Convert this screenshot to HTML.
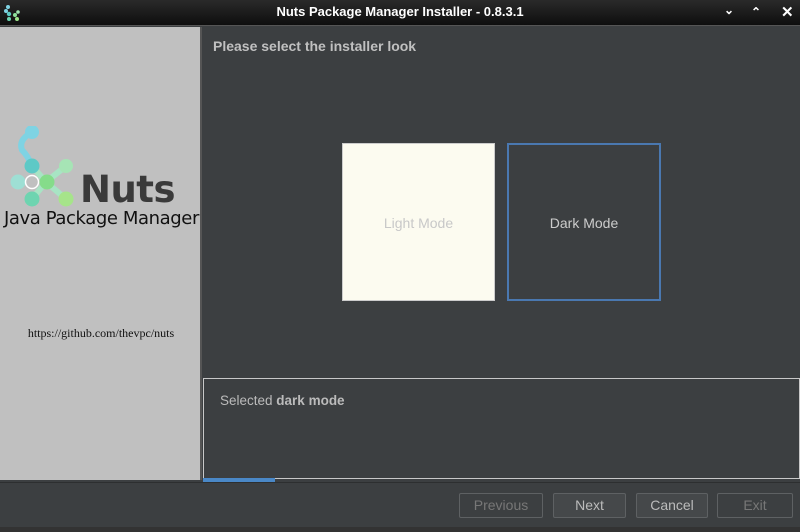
<!DOCTYPE html>
<html><head><style>
*{margin:0;padding:0;box-sizing:border-box}
body{width:800px;height:532px;background:#3c3f41;font-family:"Liberation Sans",sans-serif;position:relative;overflow:hidden}
.a{position:absolute}
.btn{position:absolute;top:493px;height:25px;border:1px solid #5e6163;border-radius:2px;font-size:14px;text-align:center;line-height:23px;color:#bbb;background:#45484a}
</style></head><body>
<div class="a" style="left:0;top:0;width:800px;height:26px;background:linear-gradient(#2a2a2a,#0e0e0e);border-bottom:1px solid #555"></div>
<svg class="a" style="left:3px;top:4px" width="18" height="18" viewBox="0 0 18 18"><circle cx="5" cy="3" r="2" fill="#7fd3e3"/><circle cx="3" cy="7" r="2" fill="#7fd3e3"/><circle cx="6" cy="10" r="2.2" fill="#5cc9c4"/><circle cx="12" cy="11" r="2" fill="#8de09a"/><circle cx="15" cy="8" r="1.8" fill="#a0e3b0"/><circle cx="6" cy="15" r="2" fill="#6ad4b0"/><circle cx="14" cy="15" r="2" fill="#9de58a"/></svg>
<div class="a" style="left:0;width:800px;top:4px;text-align:center;color:#fff;font-weight:bold;font-size:13px">Nuts Package Manager Installer - 0.8.3.1</div>
<div class="a" style="left:724px;top:3px;color:#fff;font-size:12px;font-weight:bold">&#8964;</div>
<div class="a" style="left:751px;top:5px;color:#fff;font-size:12px;font-weight:bold">&#8963;</div>
<div class="a" style="left:781px;top:3px;color:#fff;font-size:15px;font-weight:bold">✕</div>
<div class="a" style="left:0;top:27px;width:202px;height:453px;background:#c0c0c0;border-right:2px solid #555"></div>
<svg class="a" style="left:6px;top:126px" width="70" height="84" viewBox="0 0 70 84">
<g stroke-width="6" fill="none" stroke-linecap="round"><path d="M26 6 Q12 14 16 24 Q22 30 26 40" stroke="#7fd3e3"/><path d="M26 40 L40 56 L60 40 M40 56 L60 73 M26 73 L40 56" stroke="#a8e4c4"/></g>
<circle cx="26" cy="6" r="7" fill="#7fd3e3"/><circle cx="26" cy="40" r="7.5" fill="#5ec9c6"/><circle cx="12" cy="56" r="7.5" fill="#9edfd4"/><circle cx="26" cy="56" r="6.5" fill="#c0c0c0" stroke="#fff" stroke-width="1.5"/><circle cx="41" cy="56" r="7.5" fill="#85dc8a"/><circle cx="60" cy="40" r="7" fill="#a6e4b5"/><circle cx="26" cy="73" r="7.5" fill="#6ed4b0"/><circle cx="60" cy="73" r="7.5" fill="#a6e48a"/></svg>
<div class="a" style="left:80px;top:167px;font-size:37px;font-weight:bold;color:#3a3a3a;font-family:'DejaVu Sans',sans-serif;line-height:46px;letter-spacing:-0.5px">Nuts</div>
<div class="a" style="left:4px;top:208px;font-size:18px;color:#111;font-family:'DejaVu Sans',sans-serif;letter-spacing:-0.4px;white-space:nowrap">Java Package Manager</div>
<div class="a" style="left:0;width:202px;top:326px;text-align:center;font-size:12px;color:#111;font-family:'Liberation Serif',serif">https://github.com/thevpc/nuts</div>
<div class="a" style="left:213px;top:38px;color:#c0c0c0;font-weight:bold;font-size:14px">Please select the installer look</div>
<div class="a" style="left:342px;top:143px;width:153px;height:158px;background:#fcfbf0;border:1px solid #ccc;color:#c8c8c8;font-size:14px;text-align:center;line-height:158px">Light Mode</div>
<div class="a" style="left:507px;top:143px;width:154px;height:158px;border:2px solid #4a78b0;color:#ccc;font-size:14px;text-align:center;line-height:156px">Dark Mode</div>
<div class="a" style="left:203px;top:378px;width:597px;height:101px;border:1px solid #c8c8c8;background:#3c3f41"></div>
<div class="a" style="left:220px;top:393px;color:#bbb;font-size:13.5px">Selected <b>dark mode</b></div>
<div class="a" style="left:203px;top:478px;width:72px;height:4px;background:#4a88c7"></div>
<div class="a" style="left:0;top:482px;width:800px;height:1px;background:#2d2f30"></div>
<div class="btn" style="left:459px;width:84px;color:#777;background:#3c3f41">Previous</div>
<div class="btn" style="left:553px;width:73px">Next</div>
<div class="btn" style="left:636px;width:72px">Cancel</div>
<div class="btn" style="left:717px;width:76px;color:#777;background:#3c3f41">Exit</div>
<div class="a" style="left:0;top:527px;width:800px;height:5px;background:#333"></div>
</body></html>
